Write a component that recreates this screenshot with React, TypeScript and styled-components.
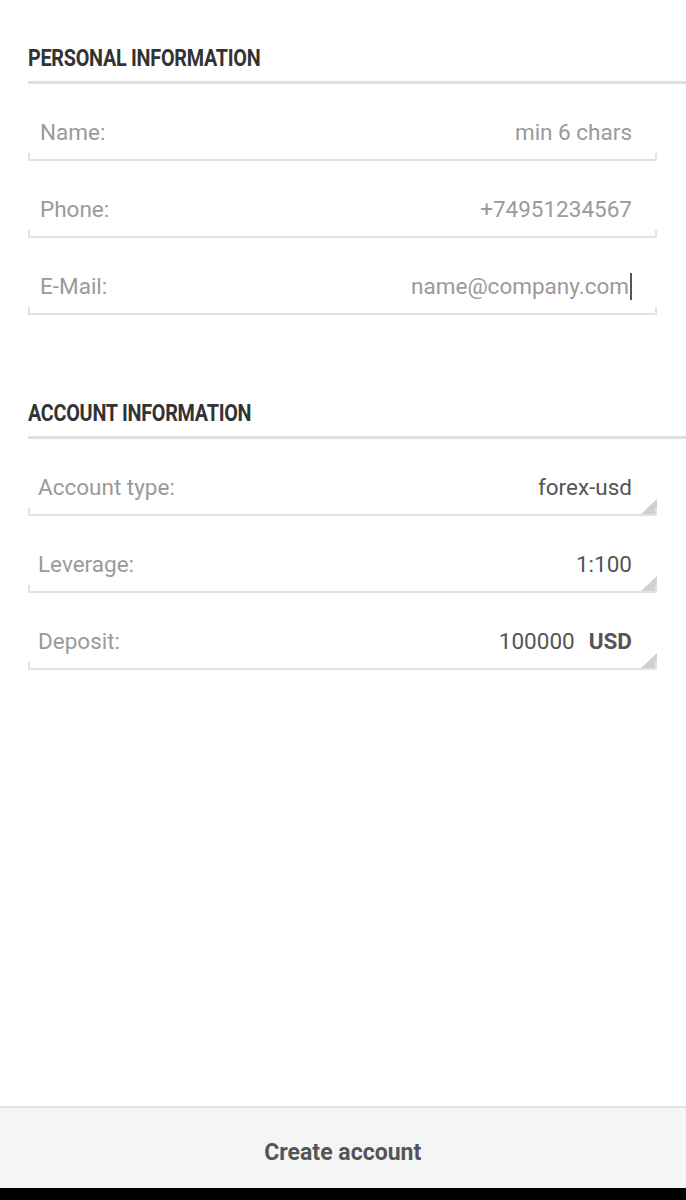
import React from "react";
import styled, { createGlobalStyle } from "styled-components";

const GlobalStyle = createGlobalStyle`
  html, body {
    margin: 0;
    padding: 0;
    background: #ffffff;
  }
  body {
    font-family: Roboto, "Liberation Sans", Arial, sans-serif;
  }
`;

const Page = styled.div`
  display: flex;
  flex-direction: column;
  width: 686px;
  height: 1200px;
  background: #ffffff;
`;

const Content = styled.div`
  flex: 1;
  display: flex;
  flex-direction: column;
`;

const Section = styled.section<{ top: number }>`
  display: flex;
  flex-direction: column;
  margin-top: ${(props) => props.top}px;
  padding-left: 28px;
`;

const SectionTitle = styled.h2`
  margin: 0;
  height: 24px;
  line-height: 24px;
  font-size: 23px;
  font-weight: 700;
  color: #333333;
  letter-spacing: -0.3px;
  transform: scaleX(0.86);
  transform-origin: left center;
  white-space: nowrap;
`;

const Divider = styled.div`
  height: 3px;
  margin-top: 10px;
  background: #dedede;
`;

const Fields = styled.div`
  display: flex;
  flex-direction: column;
  width: 629px;
`;

const Row = styled.div<{ indent: number }>`
  position: relative;
  display: flex;
  align-items: center;
  justify-content: space-between;
  height: 77px;
  padding: 21px 25px 0 ${(props) => props.indent}px;
  box-sizing: border-box;
  border-bottom: 2px solid #e2e2e2;
  font-size: 22.5px;

  &::before,
  &::after {
    content: "";
    position: absolute;
    bottom: 0;
    width: 2px;
    height: 6px;
    background: #e2e2e2;
  }
  &::before {
    left: 0;
  }
  &::after {
    right: 0;
  }
`;

const Label = styled.span`
  color: #9a9a9a;
`;

const Value = styled.span<{ dark?: boolean }>`
  display: flex;
  align-items: center;
  gap: 14px;
  color: ${(props) => (props.dark ? "#555555" : "#9a9a9a")};
`;

const Unit = styled.b`
  color: #555555;
  font-weight: 700;
`;

const Caret = styled.span`
  display: inline-block;
  width: 2px;
  height: 27px;
  margin-left: 1px;
  vertical-align: -6px;
  background: #555555;
`;

const Corner = styled.span`
  position: absolute;
  right: 0;
  bottom: 0;
  width: 0;
  height: 0;
  border-left: 16px solid transparent;
  border-bottom: 15px solid #d0d0d0;
`;

const Footer = styled.button`
  display: flex;
  align-items: center;
  justify-content: center;
  width: 100%;
  height: 82px;
  margin: 0;
  padding: 8px 0 0;
  border: none;
  border-top: 2px solid #e4e4e4;
  background: #f5f5f5;
  font-family: Roboto, "Liberation Sans", Arial, sans-serif;
  font-size: 24px;
  font-weight: 700;
  color: #555555;
  cursor: pointer;
`;

const FooterText = styled.span`
  display: inline-block;
  transform: scaleX(0.96);
`;

const NavBar = styled.div`
  height: 12px;
  background: #000000;
`;

const personal = [
  { label: "Name:", value: "min 6 chars" },
  { label: "Phone:", value: "+74951234567" },
  { label: "E-Mail:", value: "name@company.com", caret: true },
];

const account = [
  { label: "Account type:", value: "forex-usd" },
  { label: "Leverage:", value: "1:100" },
  { label: "Deposit:", value: "100000", unit: "USD" },
];

const App = () => {
  return (
    <Page>
      <GlobalStyle />
      <Content>
        <Section top={47}>
          <SectionTitle>PERSONAL INFORMATION</SectionTitle>
          <Divider />
          <Fields>
            {personal.map((f) => (
              <Row key={f.label} indent={12}>
                <Label>{f.label}</Label>
                <Value>
                  <span>
                    {f.value}
                    {f.caret && <Caret />}
                  </span>
                </Value>
              </Row>
            ))}
          </Fields>
        </Section>
        <Section top={87}>
          <SectionTitle>ACCOUNT INFORMATION</SectionTitle>
          <Divider />
          <Fields>
            {account.map((f) => (
              <Row key={f.label} indent={10}>
                <Label>{f.label}</Label>
                <Value dark>
                  <span>{f.value}</span>
                  {f.unit && <Unit>{f.unit}</Unit>}
                </Value>
                <Corner />
              </Row>
            ))}
          </Fields>
        </Section>
      </Content>
      <Footer>
        <FooterText>Create account</FooterText>
      </Footer>
      <NavBar />
    </Page>
  );
};

export default App;
